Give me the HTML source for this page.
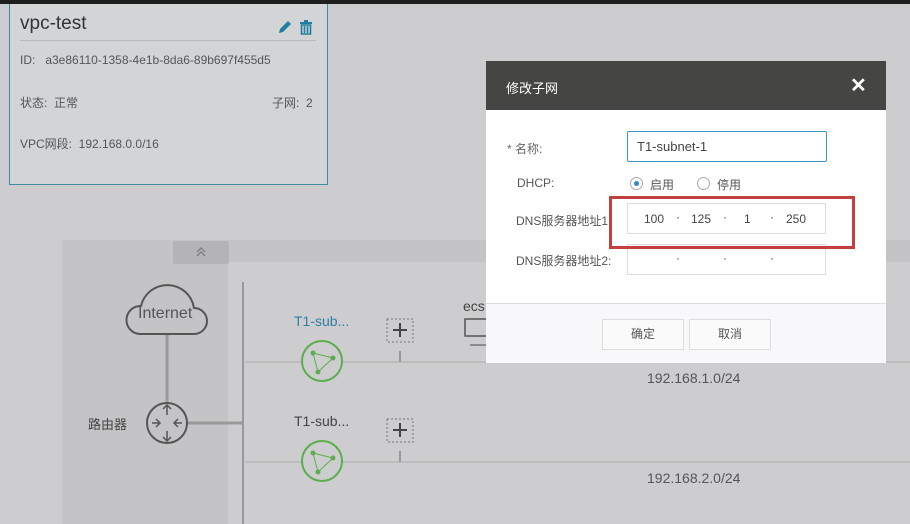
<!DOCTYPE html>
<html><head><meta charset="utf-8"><style>
*{margin:0;padding:0;box-sizing:border-box}
body{width:910px;height:524px;overflow:hidden;background:#cdcdcf;font-family:"Liberation Sans","Noto Sans CJK SC",sans-serif;position:relative;color:#444}
.a{position:absolute}
.t{position:absolute;white-space:nowrap}
</style></head><body>
<div class="a" style="left:0;top:0;width:910px;height:4px;background:#1d1f1e"></div>
<div class="a" style="left:9px;top:4px;width:319px;height:181px;background:#d3d4d6;border:1px solid #3f8c9c;border-top:none"></div>
<div class="t" style="left:20px;top:13px;font-size:19px;color:#333">vpc-test</div>
<div class="a" style="left:20px;top:40px;width:296px;height:1px;background:#b8b9bb"></div>
<svg class="a" style="left:276px;top:18px" width="40" height="18"><path d="M3 15 L4 11 L12 3 L15 6 L7 14 Z" fill="#1e7ea0"/><rect x="24" y="4" width="12" height="2" fill="#1e7ea0"/><rect x="28" y="2" width="4" height="2" fill="#1e7ea0"/><path d="M25.5 7 H34.5 V16 H25.5 Z M28.5 8 V15 M31.5 8 V15" fill="none" stroke="#1e7ea0" stroke-width="1.6"/></svg>
<div class="t" style="left:20px;top:53px;font-size:12px;color:#555">ID:&nbsp;&nbsp; a3e86110-1358-4e1b-8da6-89b697f455d5</div>
<div class="t" style="left:20px;top:94px;font-size:12px;color:#555">状态:&nbsp; 正常</div>
<div class="t" style="left:272px;top:94px;font-size:12px;color:#555">子网:&nbsp; 2</div>
<div class="t" style="left:20px;top:135px;font-size:12px;color:#555">VPC网段:&nbsp; 192.168.0.0/16</div>

<div class="a" style="left:62px;top:240px;width:848px;height:284px;background:#cdcdcf"></div>
<div class="a" style="left:62px;top:240px;width:166px;height:284px;background:#c4c4c6"></div>
<div class="a" style="left:228px;top:240px;width:682px;height:22px;background:#c4c4c6"></div>
<div class="a" style="left:173px;top:241px;width:56px;height:23px;background:#b4b4b6;border-radius:2px"></div>
<svg class="a" style="left:195px;top:247px" width="12" height="10"><path d="M2 5 L6 1 L10 5 M2 9 L6 5 L10 9" fill="none" stroke="#777" stroke-width="1.2"/></svg>
<svg class="a" style="left:0;top:0" width="910" height="524">
<path d="M140 334 H194 A13 13 0 0 0 194 308 A27 27 0 0 0 141 306 A14 14 0 0 0 140 334 Z" fill="none" stroke="#555" stroke-width="2"/>
<line x1="167" y1="335" x2="167" y2="403" stroke="#999" stroke-width="3"/>
<line x1="187" y1="423" x2="243" y2="423" stroke="#999" stroke-width="3"/>
<line x1="243" y1="282" x2="243" y2="524" stroke="#999" stroke-width="2"/>
<circle cx="167" cy="423" r="20" fill="none" stroke="#555" stroke-width="2"/>
<path d="M167 405 V415 M163 409 L167 405 L171 409 M167 441 V431 M163 437 L167 441 L171 437 M152 423 H160 M156 419 L160 423 L156 427 M182 423 H174 M178 419 L174 423 L178 427" fill="none" stroke="#555" stroke-width="1.5"/>
<line x1="245" y1="362" x2="910" y2="362" stroke="#aaa"/>
<line x1="245" y1="462" x2="910" y2="462" stroke="#aaa"/>
<circle cx="322" cy="361" r="20" fill="#cdcdcf" stroke="#5cad4d" stroke-width="2"/>
<path d="M313 353 L333 358 L318 372 Z" fill="none" stroke="#5cad4d"/><circle cx="313" cy="353" r="2.5" fill="#5cad4d"/><circle cx="333" cy="358" r="2.5" fill="#5cad4d"/><circle cx="318" cy="372" r="2.5" fill="#5cad4d"/>
<circle cx="322" cy="461" r="20" fill="#cdcdcf" stroke="#5cad4d" stroke-width="2"/>
<path d="M313 453 L333 458 L318 472 Z" fill="none" stroke="#5cad4d"/><circle cx="313" cy="453" r="2.5" fill="#5cad4d"/><circle cx="333" cy="458" r="2.5" fill="#5cad4d"/><circle cx="318" cy="472" r="2.5" fill="#5cad4d"/>
<rect x="387" y="319" width="26" height="23" fill="none" stroke="#777" stroke-dasharray="2,2"/>
<path d="M393 330 H407 M400 323 V337" stroke="#444" stroke-width="2"/>
<line x1="400" y1="351" x2="400" y2="362" stroke="#999" stroke-width="2"/>
<rect x="387" y="419" width="26" height="23" fill="none" stroke="#777" stroke-dasharray="2,2"/>
<path d="M393 430 H407 M400 423 V437" stroke="#444" stroke-width="2"/>
<line x1="400" y1="451" x2="400" y2="462" stroke="#999" stroke-width="2"/>
<rect x="465" y="319" width="25" height="17" fill="none" stroke="#555" stroke-width="1.5"/>
<line x1="470" y1="345" x2="486" y2="345" stroke="#777" stroke-width="1.5"/>
</svg>
<div class="t" style="left:138px;top:305px;font-size:16px;color:#555">Internet</div>
<div class="t" style="left:88px;top:414px;font-size:13px;color:#444">路由器</div>
<div class="t" style="left:294px;top:313px;font-size:14px;color:#2f7fa8">T1-sub...</div>
<div class="t" style="left:294px;top:413px;font-size:14px;color:#444">T1-sub...</div>
<div class="t" style="left:463px;top:298px;font-size:14px;color:#444">ecs</div>
<div class="t" style="left:647px;top:370px;font-size:14px;color:#555">192.168.1.0/24</div>
<div class="t" style="left:647px;top:470px;font-size:14px;color:#555">192.168.2.0/24</div>

<div class="a" style="left:486px;top:61px;width:400px;height:302px;background:#fff"></div>
<div class="a" style="left:486px;top:61px;width:400px;height:49px;background:#454543"></div>
<div class="t" style="left:506px;top:78px;font-size:13px;color:#fff">修改子网</div>
<div class="t" style="left:850px;top:73px;font-size:20px;color:#fff;font-weight:bold">✕</div>
<div class="a" style="left:486px;top:303px;width:400px;height:60px;background:#f8f8fa;border-top:1px solid #ddd"></div>
<div class="t" style="left:507px;top:140px;font-size:12px;color:#666">* 名称:</div>
<div class="a" style="left:627px;top:131px;width:200px;height:31px;border:1px solid #3a95c8;border-radius:2px"></div>
<div class="t" style="left:637px;top:139px;font-size:13px;color:#444">T1-subnet-1</div>
<div class="t" style="left:517px;top:176px;font-size:12px;color:#555">DHCP:</div>
<div class="a" style="left:630px;top:177px;width:13px;height:13px;border:1px solid #aaa;border-radius:50%"></div>
<div class="a" style="left:634px;top:181px;width:5px;height:5px;background:#2d8ccf;border-radius:50%"></div>
<div class="t" style="left:650px;top:176px;font-size:12px;color:#555">启用</div>
<div class="a" style="left:697px;top:177px;width:13px;height:13px;border:1px solid #aaa;border-radius:50%"></div>
<div class="t" style="left:717px;top:176px;font-size:12px;color:#555">停用</div>
<div class="t" style="left:516px;top:212px;font-size:12px;color:#555">DNS服务器地址1</div>
<div class="a" style="left:627px;top:203px;width:199px;height:31px;border:1px solid #ddd"></div>
<div class="t" style="left:644px;top:212px;font-size:12px;color:#444">100</div>
<div class="t" style="left:676px;top:210px;font-size:12px;color:#444">·</div>
<div class="t" style="left:691px;top:212px;font-size:12px;color:#444">125</div>
<div class="t" style="left:723px;top:210px;font-size:12px;color:#444">·</div>
<div class="t" style="left:744px;top:212px;font-size:12px;color:#444">1</div>
<div class="t" style="left:770px;top:210px;font-size:12px;color:#444">·</div>
<div class="t" style="left:786px;top:212px;font-size:12px;color:#444">250</div>
<div class="t" style="left:516px;top:252px;font-size:12px;color:#555">DNS服务器地址2:</div>
<div class="a" style="left:627px;top:244px;width:199px;height:31px;border:1px solid #ddd"></div>
<div class="t" style="left:676px;top:251px;font-size:12px;color:#444">·</div>
<div class="t" style="left:723px;top:251px;font-size:12px;color:#444">·</div>
<div class="t" style="left:770px;top:251px;font-size:12px;color:#444">·</div>
<div class="a" style="left:609px;top:196px;width:246px;height:53px;border:3px solid #c2403e"></div>
<div class="a" style="left:602px;top:319px;width:82px;height:31px;border:1px solid #ddd;background:#fafafa;font-size:12px;color:#555;text-align:center;line-height:29px">确定</div>
<div class="a" style="left:689px;top:319px;width:82px;height:31px;border:1px solid #ddd;background:#fafafa;font-size:12px;color:#555;text-align:center;line-height:29px">取消</div>
</body></html>
